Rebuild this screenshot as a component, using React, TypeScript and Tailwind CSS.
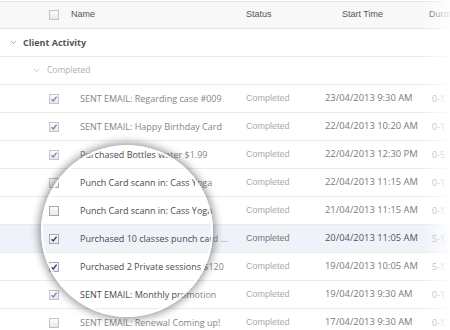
import React from 'react';
import { ChevronDown } from 'lucide-react';

interface Activity {
  name: string;
  checked: boolean;
  start: string;
  duration: string;
  active?: boolean;
}

const rows: Activity[] = [
  { name: 'SENT EMAIL: Regarding case #009', checked: true, start: '23/04/2013 9:30 AM', duration: '0-1' },
  { name: 'SENT EMAIL: Happy Birthday Card', checked: true, start: '22/04/2013 10:20 AM', duration: '0-1' },
  { name: 'Purchased Bottles water $1.99', checked: true, start: '22/04/2013 12:30 PM', duration: '0-5' },
  { name: 'Punch Card scann in: Cass Yoga', checked: false, start: '22/04/2013 11:15 AM', duration: '0-1' },
  { name: 'Punch Card scann in: Cass Yoga', checked: false, start: '21/04/2013 11:15 AM', duration: '0-1' },
  { name: 'Purchased 10 classes punch card ...', checked: true, start: '20/04/2013 11:05 AM', duration: '5-1', active: true },
  { name: 'Purchased 2 Private sessions $120', checked: true, start: '19/04/2013 10:05 AM', duration: '5-1' },
  { name: 'SENT EMAIL: Monthly promotion', checked: true, start: '19/04/2013 9:30 AM', duration: '0-1' },
  { name: 'SENT EMAIL: Renewal Coming up!', checked: false, start: '17/04/2013 9:30 AM', duration: '0-1' },
];

const open = "font-['Open_Sans',sans-serif]";
const arial = "font-['Liberation_Sans',Arial,sans-serif]";

function Checkbox({ checked, lens }: { checked: boolean; lens?: boolean }) {
  return (
    <svg width="10" height="10" viewBox="0 0 10 10" className="shrink-0">
      <defs>
        <linearGradient id="cb" x1="0" y1="0" x2="0" y2="1">
          <stop offset="0" stopColor="#ffffff" />
          <stop offset="1" stopColor="#e6e6e6" />
        </linearGradient>
      </defs>
      <rect x="0.5" y="0.5" width="9" height="9" fill="url(#cb)" stroke={lens ? '#a8a8a8' : '#c4c4c4'} />
      {checked && (
        <path
          d="M2.6 5.2 L4.3 7 L7.6 2.6"
          fill="none"
          stroke={lens ? '#2b3c8f' : '#7886bf'}
          strokeWidth="1.4"
        />
      )}
    </svg>
  );
}

function Table({ lens = false }: { lens?: boolean }) {
  return (
    <div className="w-[450px] bg-white">
      {/* Header */}
      <div className="pt-px">
        <div className={`h-[28px] flex items-center border-y border-[#e4e4e4] bg-[#f8f8f8] pl-[49px] text-[9px] text-[#555] whitespace-nowrap ${arial}`}>
          <Checkbox checked={false} lens={lens} />
          <span className="ml-[12px] w-[175px] shrink-0">Name</span>
          <span className="w-[96px] shrink-0">Status</span>
          <span className="w-[87px] shrink-0">Start Time</span>
          <span className="shrink-0">Duration</span>
        </div>
      </div>

      {/* Group */}
      <div className={`h-[28px] flex items-center border-b border-[#ebebeb] pl-[9px] ${open}`}>
        <ChevronDown size={9} strokeWidth={2} className="text-[#888]" />
        <span className="ml-[5px] text-[9px] font-bold text-[#555]">Client Activity</span>
      </div>
      <div className={`h-[28px] flex items-center border-b border-[#ebebeb] pl-[32px] ${open}`}>
        <ChevronDown size={9} strokeWidth={2} className="text-[#b0b0b0]" />
        <span className="ml-[6px] text-[8.5px] text-[#b0b0b0]">Completed</span>
      </div>

      {rows.map((row, i) => (
        <div
          key={i}
          className={`h-[28px] flex items-center border-b border-[#ebebeb] pl-[49px] whitespace-nowrap ${row.active ? 'bg-[#eef3f9]' : ''}`}
        >
          <Checkbox checked={row.checked} lens={lens} />
          <span
            className={`ml-[21px] w-[166px] shrink-0 overflow-hidden text-[9px] ${open} ${lens ? 'text-[#4a4a4a]' : 'text-[#858585]'}`}
          >
            {row.name}
          </span>
          <span className={`w-[79px] shrink-0 text-[9px] ${arial} ${row.active || lens ? 'text-[#777]' : 'text-[#ababab]'}`}>Completed</span>
          <span className={`w-[107px] shrink-0 text-[9.4px] ${open} ${row.active ? 'text-[#555]' : 'text-[#7a7a7a]'}`}>{row.start}</span>
          <span className={`shrink-0 text-[9px] ${open} text-[#999]`}>{row.duration}</span>
        </div>
      ))}
    </div>
  );
}

export default function App() {
  return (
    <div className="relative w-[450px] h-[330px] overflow-hidden bg-white">
      <Table />

      <div className="absolute inset-0 pointer-events-none [clip-path:circle(86px_at_127px_231px)]">
        <Table lens />
      </div>

      {/* Lens rim */}
      <div className="absolute left-[41px] top-[145px] w-[172px] h-[172px] rounded-full pointer-events-none border-2 border-white/90 shadow-[0_0_8px_2px_rgba(0,0,0,0.42)]" />

      {/* Right fade */}
      <div className="absolute right-0 top-0 h-full w-[28px] pointer-events-none bg-linear-to-r from-white/0 to-white/90" />
    </div>
  );
}
